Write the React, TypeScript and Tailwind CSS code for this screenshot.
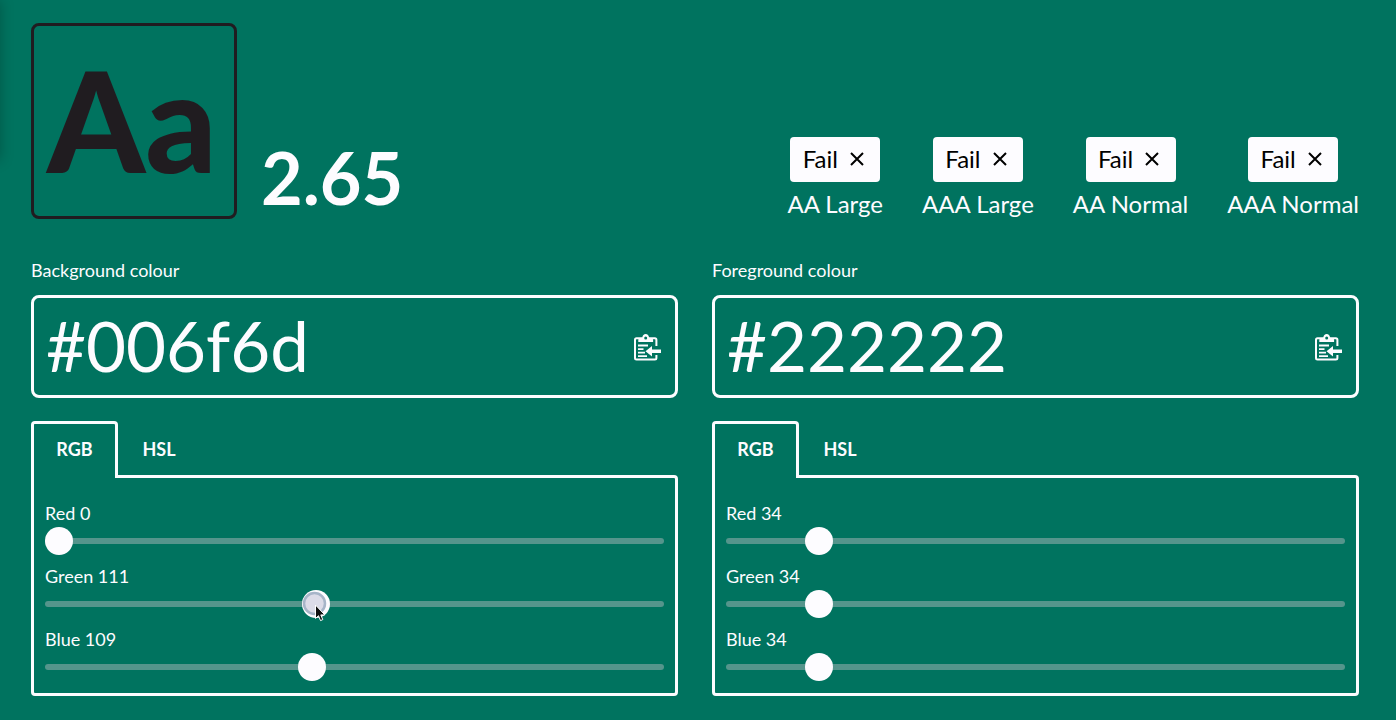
import { useId, useState } from "react";

type Rgb = { red: number; green: number; blue: number };
type Channel = keyof Rgb;

const CHANNELS: { key: Channel; label: string }[] = [
  { key: "red", label: "Red" },
  { key: "green", label: "Green" },
  { key: "blue", label: "Blue" },
];

const RESULTS = ["AA Large", "AAA Large", "AA Normal", "AAA Normal"];

const toHex = (c: Rgb) =>
  "#" + [c.red, c.green, c.blue].map((n) => n.toString(16).padStart(2, "0")).join("");

function PasteIcon() {
  return (
    <svg viewBox="0 0 27 27" className="h-[27px] w-[27px]" fill="none" aria-hidden="true">
      <path
        d="M22.4 12V5.800a1.500 1.500 0 0 0-1.500-1.500H2.500A1.500 1.500 0 0 0 1 5.800v18.200a1.500 1.500 0 0 0 1.500 1.500h18.400a1.500 1.500 0 0 0 1.500-1.500v-3"
        stroke="currentColor"
        strokeWidth="2"
      />
      <path
        d="M4.300 8.100V5.800c0-1.400 1.500-2 4-2.100C8.600 1.400 9.800.1 11.700.1s3.100 1.300 3.400 3.600c2.500.1 4 .7 4 2.100v2.300z"
        fill="currentColor"
      />
      <circle cx="11.700" cy="4" r="1.500" fill="#00735f" />
      <path d="M4 11.500h10M4 15.100h5.500M4 18.600h7M4 22.100h9" stroke="currentColor" strokeWidth="1.800" />
      <path d="M11.500 17.200l6.500-5.200v3.500h9v3.400h-9v3.500z" fill="currentColor" />
    </svg>
  );
}

function PressedPointer({ ratio }: { ratio: number }) {
  return (
    <div
      className="pointer-events-none absolute top-0"
      style={{ left: `calc(${ratio * 100}% - ${ratio * 28}px)` }}
    >
      <svg viewBox="0 0 28 34" className="h-[34px] w-7" aria-hidden="true">
        <circle cx="12.500" cy="13.500" r="10.500" fill="#dcdce8" stroke="#a7b5c8" strokeWidth="2.500" />
        <path
          d="M13.500 15v13.500l3-2.800 2 4.900 2.300-1-2-4.700h4z"
          fill="#111"
          stroke="#fff"
          strokeWidth="1"
        />
      </svg>
    </div>
  );
}

type PickerProps = { title: string; initial: Rgb; pressed?: Channel };

function ColourPicker({ title, initial, pressed }: PickerProps) {
  const id = useId();
  const [colour, setColour] = useState(initial);

  return (
    <section className="flex min-w-0 flex-col">
      <label htmlFor={`${id}-hex`} className="text-[18px] leading-6">
        {title}
      </label>
      <div className="mt-[13px] flex items-center rounded-lg border-[3px] border-[#fdfcff] pr-3.5">
        <input
          id={`${id}-hex`}
          value={toHex(colour)}
          readOnly
          className="h-[97px] min-w-0 flex-1 bg-transparent pl-3 pb-0.5 text-[69px] outline-none"
        />
        <button type="button" aria-label="Paste colour" className="pt-0.5">
          <PasteIcon />
        </button>
      </div>
      <div role="tablist" className="mt-[23px] flex h-[57px] text-[18px] font-bold">
        <button
          type="button"
          role="tab"
          aria-selected="true"
          className="relative z-10 w-[87px] rounded-t-[4px] border-[3px] border-b-0 border-[#fdfcff] bg-[#00735f] pb-[3px]"
        >
          RGB
        </button>
        <button type="button" role="tab" aria-selected="false" className="w-[82px]">
          HSL
        </button>
      </div>
      <div
        role="tabpanel"
        className="-mt-[3px] flex flex-col gap-2.5 rounded-[4px] rounded-tl-none border-[3px] border-[#fdfcff] px-[11px] pt-6 pb-3"
      >
        {CHANNELS.map(({ key, label }) => (
          <div key={key} className="flex flex-col">
            <label htmlFor={`${id}-${key}`} className="pb-0.5 text-[18px] leading-[23px]">
              {label} {colour[key]}
            </label>
            <div className="relative h-7">
              <input
                id={`${id}-${key}`}
                type="range"
                min={0}
                max={255}
                value={colour[key]}
                onChange={(e) => setColour({ ...colour, [key]: Number(e.target.value) })}
                className="block h-7 w-full appearance-none bg-transparent outline-none [&::-webkit-slider-runnable-track]:h-[6px] [&::-webkit-slider-runnable-track]:rounded-full [&::-webkit-slider-runnable-track]:bg-[#55958c] [&::-webkit-slider-thumb]:-mt-[11px] [&::-webkit-slider-thumb]:h-7 [&::-webkit-slider-thumb]:w-7 [&::-webkit-slider-thumb]:appearance-none [&::-webkit-slider-thumb]:rounded-full [&::-webkit-slider-thumb]:bg-[#fdfcff]"
              />
              {pressed === key && <PressedPointer ratio={colour[key] / 255} />}
            </div>
          </div>
        ))}
      </div>
    </section>
  );
}

export default function App() {
  return (
    <main className="relative min-h-screen overflow-hidden bg-[#00735f] pt-[23px] pr-[37px] pb-6 pl-[31px] font-['Lato',sans-serif] text-[#fdfcff]">
      <div className="absolute top-0 -left-4 h-40 w-4 shadow-[0_0_14px_rgba(0,0,0,0.25)]" />
      <header className="flex items-end justify-between">
        <div className="flex items-end gap-6">
          <div className="flex h-[196px] w-[206px] items-center justify-center rounded-lg border-[3px] border-[#201c20] pr-1 pb-1 text-[140px] leading-none font-black text-[#201c20]">
            Aa
          </div>
          <p className="pb-0.5 text-[72px] leading-[80px] font-bold">2.65</p>
        </div>
        <ul className="flex gap-[39px] text-[24px]">
          {RESULTS.map((name) => (
            <li key={name} className="flex flex-col items-center">
              <span className="flex h-[45px] w-[90px] items-center justify-center gap-3 rounded-[4px] bg-[#fdfcff] pr-1 pb-0.5 text-black">
                Fail
                <svg viewBox="0 0 14 14" className="h-3.5 w-3.5" aria-hidden="true">
                  <path d="M1 1l12 12M13 1l-12 12" stroke="currentColor" strokeWidth="2" />
                </svg>
              </span>
              <span className="mt-1.5 leading-[31px]">{name}</span>
            </li>
          ))}
        </ul>
      </header>
      <div className="mt-[39px] grid grid-cols-2 gap-[34px]">
        <ColourPicker
          title="Background colour"
          initial={{ red: 0, green: 111, blue: 109 }}
          pressed="green"
        />
        <ColourPicker title="Foreground colour" initial={{ red: 34, green: 34, blue: 34 }} />
      </div>
    </main>
  );
}
